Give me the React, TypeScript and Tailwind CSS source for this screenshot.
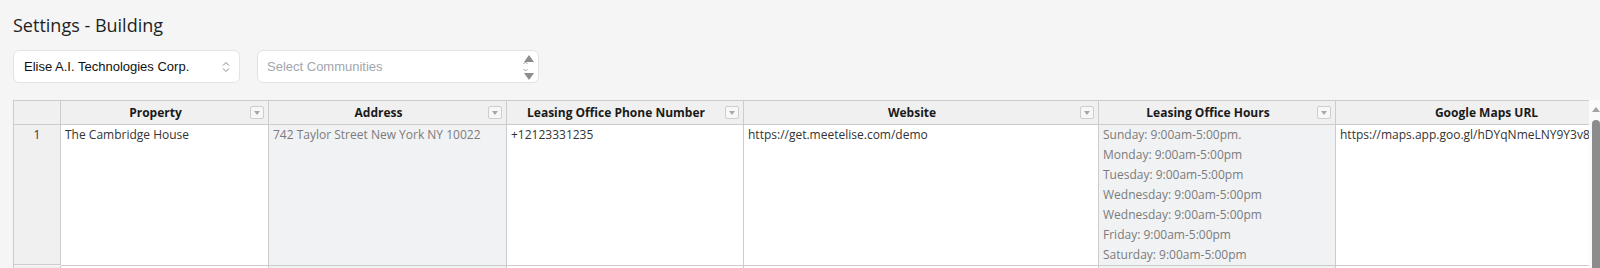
const columns = [
  { title: 'Property', filter: true },
  { title: 'Address', filter: true },
  { title: 'Leasing Office Phone Number', filter: true },
  { title: 'Website', filter: true },
  { title: 'Leasing Office Hours', filter: true },
  { title: 'Google Maps URL', filter: true },
];

const hours = [
  'Sunday: 9:00am-5:00pm.',
  'Monday: 9:00am-5:00pm',
  'Tuesday: 9:00am-5:00pm',
  'Wednesday: 9:00am-5:00pm',
  'Wednesday: 9:00am-5:00pm',
  'Friday: 9:00am-5:00pm',
  'Saturday: 9:00am-5:00pm',
];

function FilterButton() {
  return (
    <div className="mr-[4px] flex h-[13px] w-[14px] shrink-0 items-center justify-center rounded-[2px] border border-[#cdcdcd] bg-[#f7f7f7]">
      <svg width="6" height="4" viewBox="0 0 6 4">
        <polygon points="0,0 6,0 3,4" fill="#a8a8a8" />
      </svg>
    </div>
  );
}

function UpDownIcon() {
  return (
    <svg width="8" height="12" viewBox="0 0 8 12" fill="none" stroke="#8a8a8a" strokeWidth="1">
      <path d="M1 4.5 L4 1.5 L7 4.5" />
      <path d="M1 7.5 L4 10.5 L7 7.5" />
    </svg>
  );
}

function ListArrows() {
  return (
    <svg width="14" height="28" viewBox="0 0 14 28">
      <path d="M1.5 11 L3.5 9 L5.5 11" stroke="#a0a0a0" strokeWidth="1" fill="none" />
      <path d="M1.5 16 L3.5 18 L5.5 16" stroke="#a0a0a0" strokeWidth="1" fill="none" />
      <polygon points="2,9 7,2 12,9" fill="#8d8d8d" />
      <polygon points="2,20 12,20 7,27" fill="#8d8d8d" />
    </svg>
  );
}

const cell = 'border-r border-b border-[#cccccc] overflow-hidden whitespace-nowrap';

export default function App() {
  return (
    <div className="h-[268px] w-[1600px] overflow-hidden bg-[#f5f5f5] font-['Open_Sans',sans-serif]">
      <h1 className="ml-[13px] pt-[13px] text-[18px] leading-[25px] text-[#1f1f1f]">Settings - Building</h1>

      <div className="ml-[13px] mt-[12px] flex gap-[17px] font-['Liberation_Sans',Arial,sans-serif] text-[13px]">
        <div className="flex h-[33px] w-[227px] items-center justify-between rounded-[6px] border border-[#e3e3e3] bg-white pl-[10px] pr-[9px]">
          <span className="text-[#111111]">Elise A.I. Technologies Corp.</span>
          <UpDownIcon />
        </div>
        <div className="flex h-[33px] w-[282px] items-center justify-between rounded-[6px] border border-[#e3e3e3] bg-white pl-[9px] pr-[2px]">
          <span className="text-[#a3a6ad]">Select Communities</span>
          <ListArrows />
        </div>
      </div>

      <div className="ml-[13px] mt-[17px] flex">
        <div className="w-[1576px] overflow-hidden">
          <div className="grid w-max grid-cols-[47px_208px_238px_237px_355px_237px_320px] border-l border-t border-[#cccccc] text-[12px]">
            {/* header row */}
            <div className={`${cell} h-[24px] bg-[#f0f0f0]`} />
            {columns.map((c) => (
              <div key={c.title} className={`${cell} flex h-[24px] items-center bg-[#f0f0f0]`}>
                <span className="flex-1 text-center font-bold leading-[23px] text-[#1a1a1a]">{c.title}</span>
                {c.filter && <FilterButton />}
              </div>
            ))}

            {/* row 1 */}
            <div className={`${cell} h-[140px] bg-[#f0f0f0] text-center leading-[20px] text-[#333333]`}>1</div>
            <div className={`${cell} bg-white px-[4px] leading-[20px] text-[#333333]`}>The Cambridge House</div>
            <div className={`${cell} bg-[#f1f2f4] px-[4px] leading-[20px] text-[#7b7b7b]`}>742 Taylor Street New York NY 10022</div>
            <div className={`${cell} bg-white px-[4px] leading-[20px] text-[#333333]`}>+12123331235</div>
            <div className={`${cell} bg-white px-[4px] leading-[20px] text-[#333333]`}>https://get.meetelise.com/demo</div>
            <div className={`${cell} bg-[#f1f2f4] px-[4px] leading-[20px] text-[#7b7b7b]`}>
              {hours.map((h, i) => (
                <div key={i}>{h}</div>
              ))}
            </div>
            <div className={`${cell} bg-white px-[4px] leading-[20px] text-[#333333]`}>https://maps.app.goo.gl/hDYqNmeLNY9Y3v8</div>

            {/* row 2 (cut off) */}
            <div className={`${cell} h-[22px] bg-[#f0f0f0]`} />
            <div className={`${cell} bg-white`} />
            <div className={`${cell} bg-[#f1f2f4]`} />
            <div className={`${cell} bg-white`} />
            <div className={`${cell} bg-white`} />
            <div className={`${cell} bg-[#f1f2f4]`} />
            <div className={`${cell} bg-white`} />
          </div>
        </div>
        <div className="flex h-[200px] w-[11px] flex-col items-end bg-[#fafafa]">
          <svg width="8" height="12" viewBox="0 0 8 12" className="mt-[3px]">
            <polygon points="0,9 4,4 8,9" fill="#a3a3a3" />
          </svg>
          <div className="mt-[5px] h-[160px] w-[8px] rounded-t-[4px] bg-[#8c8c8c]" />
        </div>
      </div>
    </div>
  );
}
